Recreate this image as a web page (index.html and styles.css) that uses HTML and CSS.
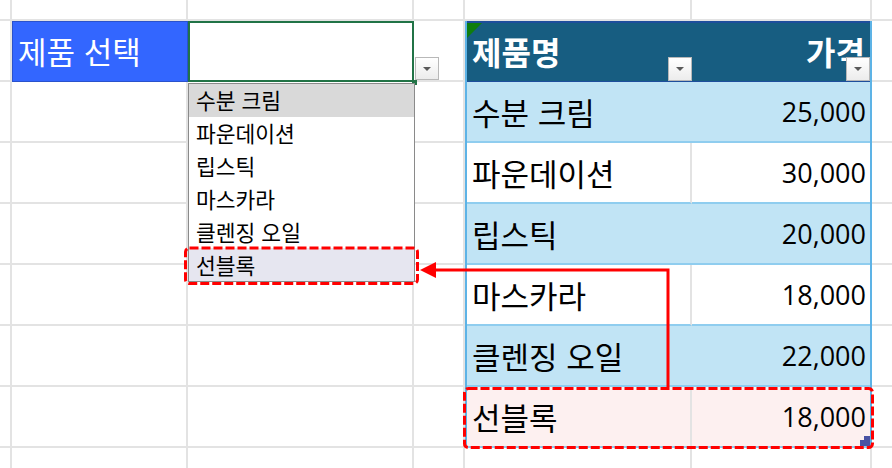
FILE: index.html
```html
<!DOCTYPE html>
<html lang="ko">
<head>
<meta charset="utf-8">
<title>제품 선택</title>
<link rel="stylesheet" href="styles.css">
</head>
<body>
<div class="sheet">
  <div class="title">제품 선택</div>
  <div class="active">
    <span class="dd-btn"></span>
    <span class="handle"></span>
  </div>
  <div class="table">
    <div class="th name">제품명<span class="filter"></span></div>
    <div class="th price">가격<span class="filter"></span></div>
    <div class="td name band">수분 크림</div><div class="td num band">25,000</div>
    <div class="td name plain">파운데이션</div><div class="td num plain">30,000</div>
    <div class="td name band">립스틱</div><div class="td num band">20,000</div>
    <div class="td name plain">마스카라</div><div class="td num plain">18,000</div>
    <div class="td name band">클렌징 오일</div><div class="td num band">22,000</div>
    <div class="td name pink">선블록</div><div class="td num pink">18,000<span class="resize"><svg width="10" height="10" viewBox="0 0 10 10"><polygon points="4,0 10,0 10,10 0,10 0,4 4,4" fill="#4a53a3"/></svg></span></div>
  </div>
  <div class="cell"></div><div class="cell"></div><div class="cell"></div><div class="cell"></div><div class="cell"></div><div class="cell"></div><div class="cell"></div>
  <div class="cell"></div><div class="cell"></div><div class="cell"></div><div class="cell"></div><div class="cell"></div><div class="cell"></div><div class="cell"></div>
  <div class="cell"></div><div class="cell"></div><div class="cell"></div><div class="cell"></div><div class="cell"></div><div class="cell"></div><div class="cell"></div>
  <div class="cell"></div><div class="cell"></div><div class="cell"></div><div class="cell"></div><div class="cell"></div><div class="cell"></div><div class="cell"></div>
  <div class="cell"></div><div class="cell"></div><div class="cell"></div><div class="cell"></div><div class="cell"></div><div class="cell"></div><div class="cell"></div>
  <div class="cell"></div><div class="cell"></div><div class="cell"></div><div class="cell"></div><div class="cell"></div><div class="cell"></div><div class="cell"></div>
  <div class="cell"></div><div class="cell"></div><div class="cell"></div><div class="cell"></div><div class="cell"></div>

  <div class="dropdown">
    <div class="item hover">수분 크림</div>
    <div class="item">파운데이션</div>
    <div class="item">립스틱</div>
    <div class="item">마스카라</div>
    <div class="item">클렌징 오일</div>
    <div class="item sel">선블록</div>
  </div>

  <svg class="marks" width="892" height="468" viewBox="0 0 892 468">
    <rect x="185.5" y="248" width="232" height="35.5" rx="4" fill="none" stroke="#ff0000" stroke-width="3" stroke-dasharray="9 3"/>
    <rect x="464.5" y="388.5" width="408" height="59" rx="4" fill="none" stroke="#ff0000" stroke-width="3" stroke-dasharray="9 3"/>
    <polyline points="668,387 668,270 434,270" fill="none" stroke="#ff0000" stroke-width="3"/>
    <polygon points="420,270 436,262 436,278" fill="#ff0000"/>
  </svg>
</div>
</body>
</html>
```

FILE: styles.css
```css
* {
  box-sizing: border-box;
}

html, body {
  margin: 0;
  padding: 0;
  overflow: hidden;
  background: #ffffff;
}

body {
  font-family: "Noto Sans CJK KR", "Noto Sans", sans-serif;
  color: #000000;
}

.sheet {
  position: relative;
  width: 896px;
  height: 470px;
  display: grid;
  grid-template-columns: 12px 176px 226px 51px 227px 180px 24px;
  grid-template-rows: 21px repeat(7, 61px) 22px;
}

.cell {
  border-right: 2px solid #e3e3e3;
  border-bottom: 2px solid #e3e3e3;
}

.title {
  grid-column: 2;
  grid-row: 2;
  background: #3366ff;
  border: 1px solid #2a52cc;
  color: #ffffff;
  font-size: 31px;
  display: flex;
  align-items: center;
  padding-left: 5px;
  padding-bottom: 2px;
}

.active {
  grid-column: 3;
  grid-row: 2;
  border: 2px solid #217346;
  position: relative;
}

.dd-btn {
  position: absolute;
  right: -27px;
  bottom: 0;
  width: 24px;
  height: 23px;
  border: 1px solid #b8b8b8;
  background: linear-gradient(#ffffff, #ececec);
  display: flex;
  align-items: center;
  justify-content: center;
}

.dd-btn::after,
.filter::after {
  content: "";
  width: 0;
  height: 0;
  border-left: 4px solid transparent;
  border-right: 4px solid transparent;
  border-top: 4px solid #5a5a5a;
}

.handle {
  position: absolute;
  right: -5px;
  bottom: -5px;
  width: 5px;
  height: 5px;
  background: #217346;
}

.table {
  grid-column: 5 / 7;
  grid-row: 2 / 9;
  display: grid;
  grid-template-columns: 225px 1fr;
  grid-template-rows: repeat(7, 1fr);
  border-left: 2px solid #5db3e6;
  border-right: 2px solid #5db3e6;
}

.th {
  position: relative;
  background: #175d81;
  color: #ffffff;
  font-weight: 700;
  font-size: 32px;
  border-top: 2px solid #1e4e9c;
  border-bottom: 1px solid #1e4e9c;
  display: flex;
  align-items: center;
  padding-bottom: 2px;
}

.th.name {
  padding-left: 5px;
}

.th.name::before {
  content: "";
  position: absolute;
  left: 0;
  top: 0;
  width: 0;
  height: 0;
  border-top: 15px solid #0f7d0f;
  border-right: 15px solid transparent;
}

.th.price {
  justify-content: flex-end;
  padding-right: 5px;
}

.filter {
  position: absolute;
  right: 0;
  bottom: 0;
  width: 24px;
  height: 24px;
  border: 1px solid #b8b8b8;
  background: linear-gradient(#ffffff, #ececec);
  display: flex;
  align-items: center;
  justify-content: center;
}

.td {
  position: relative;
  display: flex;
  align-items: center;
  border-bottom: 2px solid #8fcdef;
  font-size: 31px;
  padding-bottom: 1px;
}

.td.name {
  padding-left: 5px;
}

.td.num {
  justify-content: flex-end;
  padding-right: 4px;
  font-family: "Open Sans", "Noto Sans CJK KR", sans-serif;
  font-size: 27px;
}

.band {
  background: #c1e4f5;
}

.plain {
  background: #ffffff;
}

.pink {
  background: #fdf0f0;
}

.td.name.plain,
.td.name.pink {
  border-right: 2px solid #e3e3e3;
}

.resize {
  position: absolute;
  right: 0;
  bottom: 0;
  width: 10px;
  height: 10px;
  display: flex;
}

.dropdown {
  position: absolute;
  left: 188px;
  top: 83px;
  width: 227px;
  height: 199px;
  border: 1px solid #8a8a8a;
  background: #ffffff;
  display: grid;
  grid-template-rows: repeat(6, 1fr);
  font-size: 21.5px;
}

.item {
  display: flex;
  align-items: center;
  padding-left: 7px;
  padding-bottom: 1px;
}

.item.hover {
  background: #d9d9d9;
}

.item.sel {
  background: #e6e6f0;
}

.marks {
  position: absolute;
  left: 0;
  top: 0;
  pointer-events: none;
}
```
